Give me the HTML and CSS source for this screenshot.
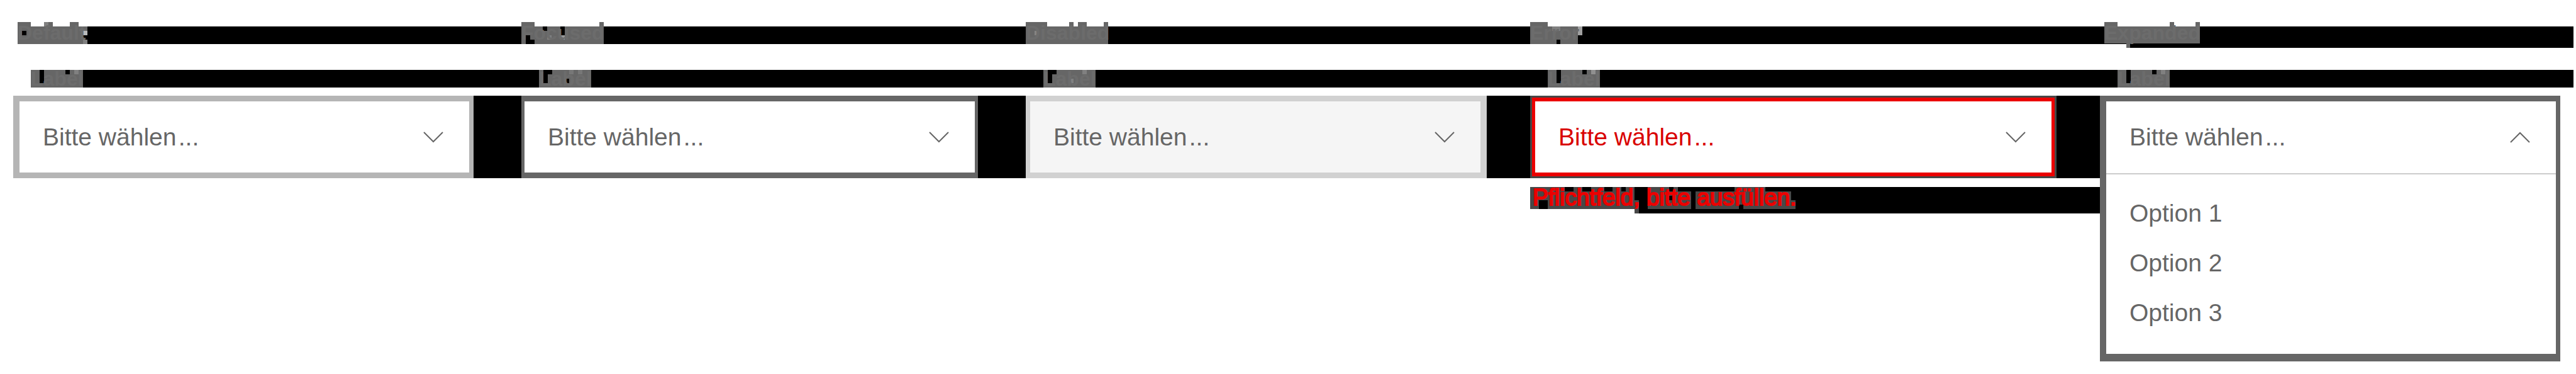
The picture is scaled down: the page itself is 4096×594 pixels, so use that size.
FILE: index.html
```html
<!DOCTYPE html>
<html lang="de">
<head>
<meta charset="utf-8">
<title>Select</title>
<link rel="stylesheet" href="styles.css">
</head>
<body>
<main class="states">
  <section class="state state-default">
    <h2 class="title"><svg class="plate" width="111" height="35" viewBox="0 0 16 5" preserveAspectRatio="none" shape-rendering="crispEdges" aria-hidden="true"><path fill="#666" d="M0 0h3v1h3V0h2v1h4V0h2v1h2v4H0z"/><path d="M1 2h1v1H1zM15 3h1v1h-1z"/><path fill="#bbb" d="M15 2h1v1h-1z"/><path fill="#808080" d="M6 0h1v1H6zM15 4h1v1h-1z"/></svg><span class="word">Default</span></h2>
    <label class="label" for="s1"><svg class="plate" width="83" height="28" viewBox="0 0 12 4" preserveAspectRatio="none" shape-rendering="crispEdges" aria-hidden="true"><path fill="#666" d="M0 0h12v4H0z"/><path d="M2 0h1v3H2zM8 0h1v1H8z"/><path fill="#808080" d="M10 0h1v1h-1z"/></svg><span class="word">Label</span></label>
    <div class="row"><div class="control"><select class="box" id="s1"><option>Bitte wählen&#8202;...</option></select><svg class="chevron" width="32" height="18" viewBox="0 0 32 18" aria-hidden="true"><path d="M1 1l15 15L31 1"/></svg></div></div>
  </section>

  <section class="state state-focused">
    <h2 class="title"><svg class="plate" width="131" height="35" viewBox="0 0 19 5" preserveAspectRatio="none" shape-rendering="crispEdges" aria-hidden="true"><path fill="#666" d="M0 0h3v1h15V0h1v5H0z"/><path d="M5 1h1v1H5zM9 1h1v2H9zM1 3h1v1h1v1H1z"/><path fill="#808080" d="M6 3h1v1H6z"/><path fill="#999" d="M9 3h1v1H9z"/></svg><span class="word">Focused</span></h2>
    <label class="label" for="s2"><svg class="plate" width="83" height="28" viewBox="0 0 12 4" preserveAspectRatio="none" shape-rendering="crispEdges" aria-hidden="true"><path fill="#666" d="M0 0h12v4H0z"/><path d="M1 0h2v1H2v2H1zM6 2h1v1H6z"/><path fill="#777" d="M7 0h1v1H7zM9 0h1v1H9z"/></svg><span class="word">Label</span></label>
    <div class="row"><div class="control"><select class="box" id="s2"><option>Bitte wählen&#8202;...</option></select><svg class="chevron" width="32" height="18" viewBox="0 0 32 18" aria-hidden="true"><path d="M1 1l15 15L31 1"/></svg></div></div>
  </section>

  <section class="state state-disabled">
    <h2 class="title"><svg class="plate" width="131" height="35" viewBox="0 0 19 5" preserveAspectRatio="none" shape-rendering="crispEdges" aria-hidden="true"><path fill="#666" d="M0 0h5v1h5V0h1v1h1V0h2v1h4V0h1v5H0z"/><path fill="#858585" d="M2 2h1v1H2z"/></svg><span class="word">Disabled</span></h2>
    <label class="label" for="s3"><svg class="plate" width="83" height="28" viewBox="0 0 12 4" preserveAspectRatio="none" shape-rendering="crispEdges" aria-hidden="true"><path fill="#666" d="M0 0h12v4H0z"/><path d="M1 0h2v1H2v2H1z"/><path fill="#808080" d="M6 2h1v1H6zM9 0h1v1H9z"/></svg><span class="word">Label</span></label>
    <div class="row"><div class="control"><select class="box" id="s3" disabled><option>Bitte wählen&#8202;...</option></select><svg class="chevron" width="32" height="18" viewBox="0 0 32 18" aria-hidden="true"><path d="M1 1l15 15L31 1"/></svg></div></div>
  </section>

  <section class="state state-error">
    <h2 class="title"><svg class="plate" width="83" height="35" viewBox="0 0 12 5" preserveAspectRatio="none" shape-rendering="crispEdges" aria-hidden="true"><path fill="#666" d="M0 0h4v1h7v4H0z"/><path d="M6 4h1v1H6z"/><path fill="#808080" d="M5 1h2v1H5z"/><path fill="#a0a0a0" d="M11 1h1v2h-1z"/></svg><span class="word">Error</span></h2>
    <label class="label" for="s4"><svg class="plate" width="83" height="28" viewBox="0 0 12 4" preserveAspectRatio="none" shape-rendering="crispEdges" aria-hidden="true"><path fill="#666" d="M0 0h12v4H0z"/><path d="M2 0h1v3H2zM8 0h1v1H8z"/><path fill="#909090" d="M10 0h1v1h-1z"/></svg><span class="word">Label</span></label>
    <div class="row"><div class="control"><select class="box" id="s4" aria-invalid="true" aria-describedby="e4"><option>Bitte wählen&#8202;...</option></select><svg class="chevron" width="32" height="18" viewBox="0 0 32 18" aria-hidden="true"><path d="M1 1l15 15L31 1"/></svg></div></div>
    <p class="message" id="e4"><svg class="plate" width="422" height="42" viewBox="0 0 61 6" preserveAspectRatio="none" shape-rendering="crispEdges" aria-hidden="true"><path fill="#484848" d="M0 0h8v1h2V0h2v1h2V0h3v1h2V0h2v1h1V0h2v3h1v3h-1V5H0zM27 0h5v1h1V0h1v1h3v4H27zM38 1h9V0h7v1h6v2h1v2H38z"/><path d="M2 3h2v2H2zM32 2h1v1h-1zM48 4h1v1h-1z"/></svg><span class="message-text">Pflichtfeld, bitte ausfüllen.</span></p>
  </section>

  <section class="state state-expanded">
    <h2 class="title"><svg class="plate" width="152" height="41" viewBox="0 0 22 6" preserveAspectRatio="none" shape-rendering="crispEdges" aria-hidden="true"><path fill="#666" d="M0 0h3v1h12V0h1v1h5V0h1v5H6v1H5V5H0z"/></svg><span class="word">Expanded</span></h2>
    <label class="label" for="s5"><svg class="plate" width="83" height="28" viewBox="0 0 12 4" preserveAspectRatio="none" shape-rendering="crispEdges" aria-hidden="true"><path fill="#666" d="M0 0h12v4H0z"/><path d="M2 0h1v3H2zM8 0h1v1H8z"/><path fill="#808080" d="M10 0h1v1h-1z"/></svg><span class="word">Label</span></label>
    <div class="row"><div class="dropdown">
      <button class="trigger" id="s5" type="button" aria-haspopup="listbox" aria-expanded="true">Bitte wählen&#8202;...<svg class="caret" width="32" height="18" viewBox="0 0 32 18" aria-hidden="true"><path d="M1 17L16 2l15 15"/></svg></button>
      <ul class="options" role="listbox" aria-labelledby="s5">
        <li role="option">Option 1</li>
        <li role="option">Option 2</li>
        <li role="option">Option 3</li>
      </ul>
    </div></div>
  </section>
</main>
</body>
</html>
```
FILE: styles.css
```css
* { box-sizing: border-box; }

body {
  margin: 0;
  background: #fff;
  color: #666;
  font-family: "Liberation Sans", Arial, sans-serif;
  font-size: 39px;
}

.states {
  display: grid;
  grid-template-columns: 808fr 802fr 802fr 906fr 757fr;
  padding: 35px 0 20px 21px;
}

.state { min-width: 0; }

.plate { display: block; grid-area: 1 / 1; }

.word,
.message-text { grid-area: 1 / 1; white-space: nowrap; }

.word {
  color: #6c6c6c;
  font-size: 32px;
  font-weight: 700;
  line-height: 28px;
}

.title {
  display: grid;
  justify-content: start;
  align-items: start;
  height: 41px;
  margin: 0;
  background: linear-gradient(#000, #000) 0 7px / 100% 28px no-repeat;
}
.title .word { line-height: 35px; }

.label {
  display: grid;
  justify-content: start;
  height: 28px;
  margin-top: 35px;
  padding-left: 28px;
  background: #000;
}

.state-default .title { margin-left: 7px; }
.state-default .label { margin-left: 28px; padding-left: 0; }

.row {
  display: flex;
  min-height: 131px;
  margin-top: 13px;
  padding-right: 76px;
  background: #000;
}
.state-default .row {
  background: linear-gradient(90deg, #fff 50%, #000 50%);
}

.control {
  display: grid;
  flex: 1;
  align-items: center;
}

.box {
  grid-area: 1 / 1;
  align-self: stretch;
  width: 100%;
  margin: 0;
  padding: 0 37px;
  border: 9px solid #b5b5b5;
  border-width: 9px 7px 9px 10px;
  border-radius: 0;
  background: #fff;
  color: #666;
  font: inherit;
  opacity: 1;
  appearance: none;
}

.chevron {
  grid-area: 1 / 1;
  justify-self: end;
  margin-right: 48px;
  pointer-events: none;
}

.chevron path,
.caret path {
  fill: none;
  stroke: #666;
  stroke-width: 2;
}

.state-focused .box { border-color: #666; border-width: 9px 5px; }
.state-focused .chevron { margin-right: 46px; }

.state-disabled .row { padding-right: 69px; }
.state-disabled .box {
  border-color: #d1d1d1;
  border-width: 9px 10px 9px 7px;
  background: #f5f5f5;
}
.state-disabled .chevron { margin-right: 51px; }

.state-error .row { padding-right: 69px; }
.state-error .control { border: 3px solid #484848; }
.state-error .box {
  border-color: #eb0000;
  border-width: 6px 5px;
  color: #d90000;
}
.state-error .chevron { margin-right: 46px; }

.message {
  display: grid;
  justify-content: start;
  align-items: start;
  height: 42px;
  margin: 14px 0 0;
  background:
    linear-gradient(#000, #000) 0 0 / 100% 35px no-repeat,
    linear-gradient(#000, #000) 166px 0 / 100% 42px no-repeat;
}

.message-text {
  padding-left: 4px;
  color: #eb0000;
  font-size: 37px;
  line-height: 33px;
  -webkit-text-stroke: 2px #eb0000;
}

.state-expanded .title {
  margin-right: 4px;
  padding-left: 7px;
  background:
    linear-gradient(#000, #000) 0 7px / 100% 28px no-repeat,
    linear-gradient(#000, #000) 48px 7px / 100% 34px no-repeat;
}
.state-expanded .label { margin-right: 4px; }
.state-expanded .row { padding-right: 25px; background: none; }

.dropdown {
  flex: 1;
  border: 10px solid #666;
  border-width: 9px 7px 12px 10px;
  background: #fff;
}

.trigger {
  display: flex;
  align-items: center;
  justify-content: space-between;
  width: 100%;
  height: 116px;
  padding: 0 41px 0 37px;
  border: 0;
  border-bottom: 2px solid #ccc;
  background: none;
  color: inherit;
  font: inherit;
}

.options {
  margin: 0;
  padding: 22px 37px 26px;
  list-style: none;
  line-height: 79px;
}
```
